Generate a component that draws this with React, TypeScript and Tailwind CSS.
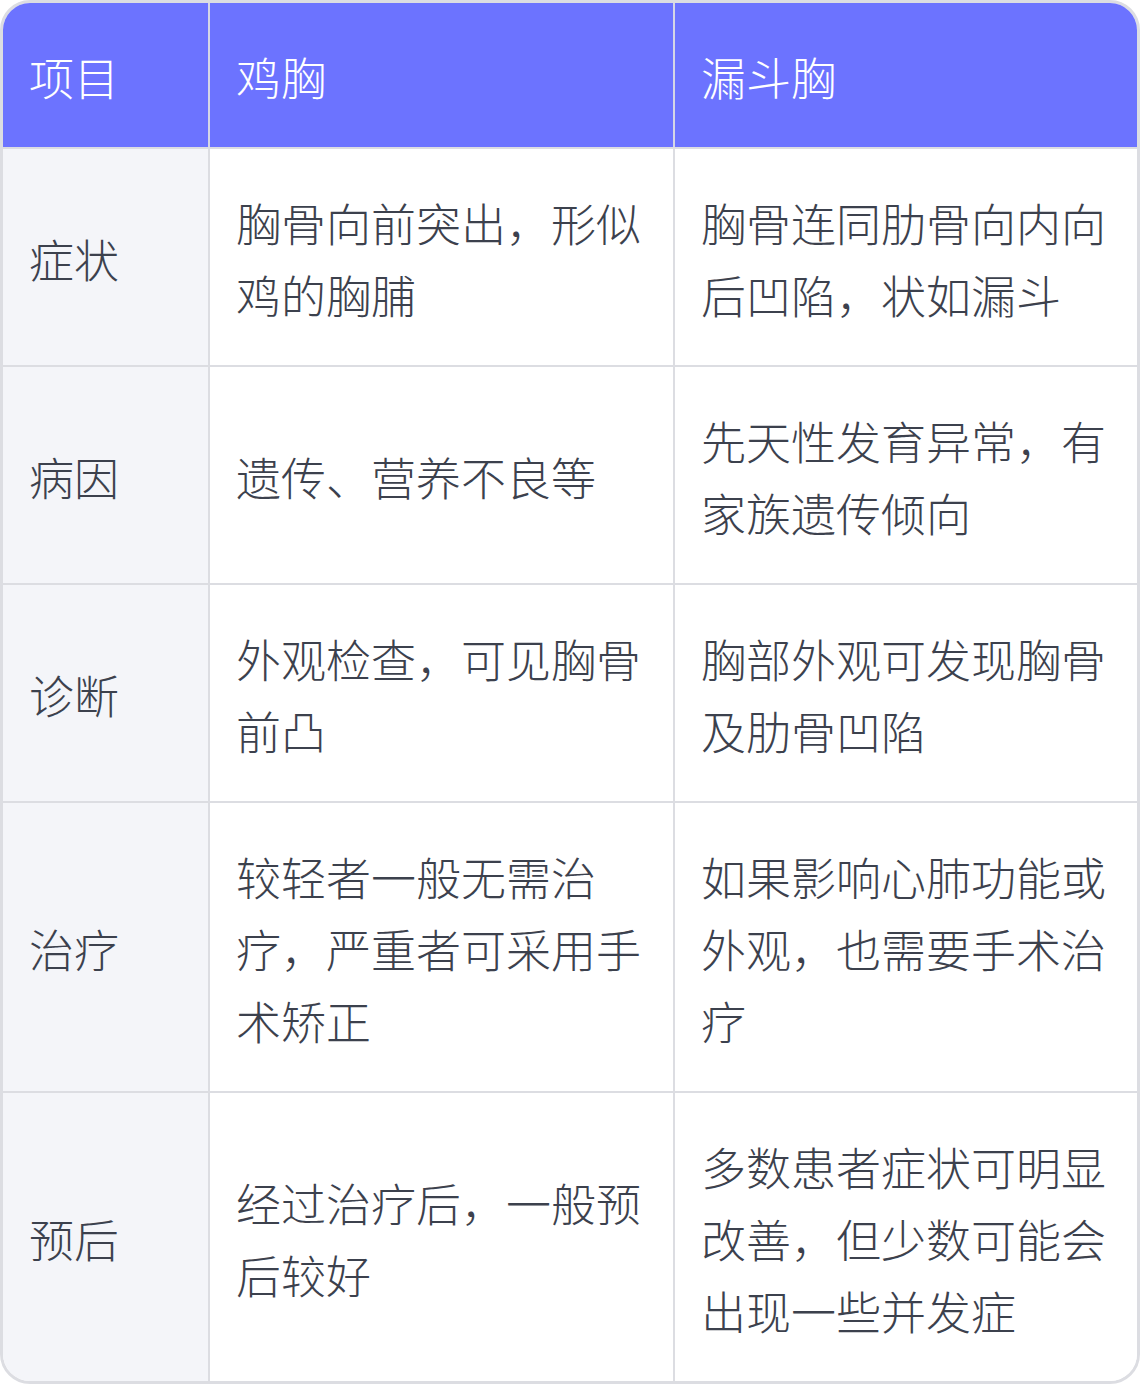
import React from 'react';

interface Row {
  item: string;
  pectus: string;
  funnel: string;
}

const rows: Row[] = [
  { item: '症状', pectus: '胸骨向前突出，形似鸡的胸脯', funnel: '胸骨连同肋骨向内向后凹陷，状如漏斗' },
  { item: '病因', pectus: '遗传、营养不良等', funnel: '先天性发育异常，有家族遗传倾向' },
  { item: '诊断', pectus: '外观检查，可见胸骨前凸', funnel: '胸部外观可发现胸骨及肋骨凹陷' },
  { item: '治疗', pectus: '较轻者一般无需治疗，严重者可采用手术矫正', funnel: '如果影响心肺功能或外观，也需要手术治疗' },
  { item: '预后', pectus: '经过治疗后，一般预后较好', funnel: '多数患者症状可明显改善，但少数可能会出现一些并发症' },
];

const font = { fontFamily: '"Noto Sans CJK SC", "Noto Sans", sans-serif' };

const cell = 'pl-[26px] pr-[28px] pt-[38px] pb-[34px] flex items-center';

const App: React.FC = () => {
  return (
    <div className="w-[1140px] bg-white" style={font}>
      <div className="rounded-[30px] border-[3px] border-[#dcdde2] overflow-hidden">
        <div className="grid grid-cols-[205px_465px_1fr] text-[45px] leading-[72px] font-light">
          {/* header */}
          <div className={`bg-[#6c73ff] text-white ${cell}`}>项目</div>
          <div className={`bg-[#6c73ff] text-white border-l-2 border-[#d5d6e6] ${cell}`}>鸡胸</div>
          <div className={`bg-[#6c73ff] text-white border-l-2 border-[#d5d6e6] ${cell}`}>漏斗胸</div>

          {rows.map((row) => (
            <React.Fragment key={row.item}>
              <div className={`bg-[#f4f5f9] text-[#3c414d] border-t-2 border-[#dcdde2] ${cell}`}>
                {row.item}
              </div>
              <div className={`bg-white text-[#3c414d] border-t-2 border-l-2 border-[#dcdde2] ${cell}`}>
                {row.pectus}
              </div>
              <div className={`bg-white text-[#3c414d] border-t-2 border-l-2 border-[#dcdde2] ${cell}`}>
                {row.funnel}
              </div>
            </React.Fragment>
          ))}
        </div>
      </div>
    </div>
  );
};

export default App;
